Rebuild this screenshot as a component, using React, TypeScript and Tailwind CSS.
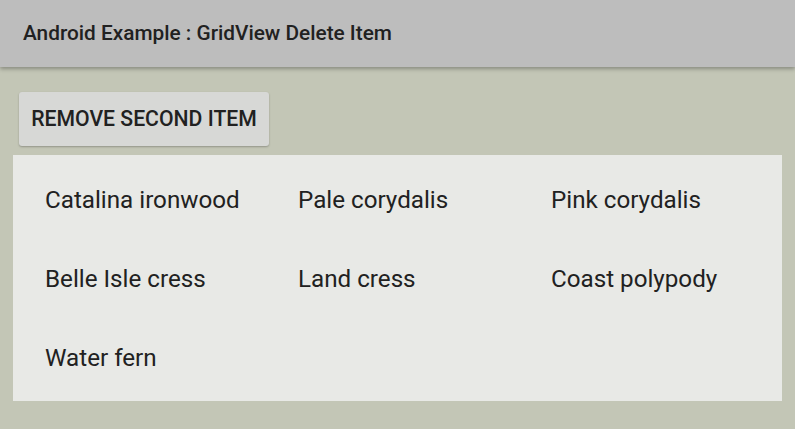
import React from "react";

const items = [
  "Catalina ironwood",
  "Pale corydalis",
  "Pink corydalis",
  "Belle Isle cress",
  "Land cress",
  "Coast polypody",
  "Water fern",
];

export default function App() {
  return (
    <div
      className="w-[795px] h-[429px] bg-[#c3c6b6] overflow-hidden flex flex-col"
      style={{ fontFamily: "Roboto, 'Liberation Sans', sans-serif" }}
    >
      <div className="h-[67px] shrink-0 bg-[#bdbdbd] flex items-center pl-[23px] shadow-[0_2px_4px_rgba(0,0,0,0.3)] relative z-10">
        <span className="text-[20.8px] font-medium text-[#212121] leading-none">
          Android Example : GridView Delete Item
        </span>
      </div>
      <div className="pl-[19px] pt-[25px]">
        <button className="w-[250px] h-[54px] bg-[#d7d8d6] rounded-[3px] shadow-[0_1px_2px_rgba(0,0,0,0.25)] text-[21.2px] font-medium text-[#212121] flex items-center justify-center">
          REMOVE SECOND ITEM
        </button>
      </div>
      <div className="mx-[13px] mt-[9px] h-[246px] bg-[#e8e9e6] pl-[32px] pt-[6px]">
        <div className="grid grid-cols-[253px_253px_253px]">
          {items.map((t) => (
            <div
              key={t}
              className="h-[79px] flex items-center text-[24.2px] text-[#212121]"
            >
              {t}
            </div>
          ))}
        </div>
      </div>
    </div>
  );
}
